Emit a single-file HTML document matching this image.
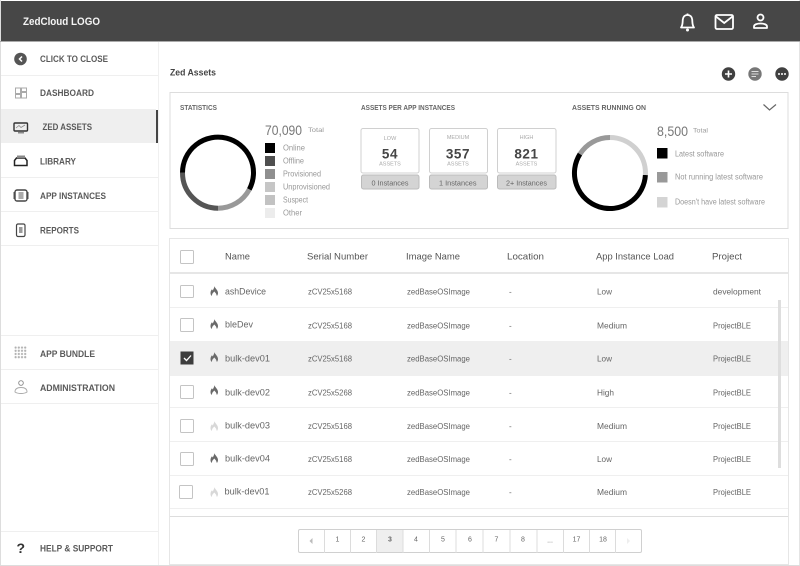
<!DOCTYPE html>
<html lang="en"><head><meta charset="utf-8"><title>Zed Assets</title>
<style>
html,body{margin:0;padding:0;background:#fff;width:800px;height:566px;overflow:hidden}
svg{display:block}
text{font-family:"Liberation Sans",sans-serif;dominant-baseline:central}
.nav{font-size:9px;font-weight:bold;fill:#5a5a5a}
.th{font-size:9.500px;fill:#555}
.td{font-size:8px;fill:#666}
.nm{font-size:9.500px;fill:#666}
.ttl{font-size:7px;font-weight:bold;fill:#666}
.lg{font-size:8px;fill:#999}
.big{font-size:14px;fill:#777}
.sm{font-size:6px;fill:#999}
.num{font-size:13.500px;font-weight:bold;fill:#444;text-anchor:middle;letter-spacing:.6px}
.ins{font-size:7.500px;fill:#666}
.pg{font-size:7px;fill:#666;text-anchor:middle}
</style></head><body>
<svg width="800" height="566" viewBox="0 0 800 566" xmlns="http://www.w3.org/2000/svg">
<defs>
<filter id="b" x="-2%" y="-2%" width="104%" height="104%"><feGaussianBlur stdDeviation="0.35"/></filter>
<path id="fl" d="M3.800 0C4.200 2 7.500 4 7.500 7C7.500 8.200 7.100 9.200 6.400 10L5.500 7.500L3.800 5.500L2 7.500L1.100 10C.4 9.200 0 8.200 0 7C0 5.200 .8 4 1.500 3.200L2.200 4.500C3 3 4 1.500 3.800 0Z"/>
<pattern id="dots" x="14" y="346" width="3.200" height="3.200" patternUnits="userSpaceOnUse"><circle cx="1.600" cy="1.600" r="1.100" fill="#b0b0b0"/></pattern>
</defs>
<g filter="url(#b)">
<rect width="800" height="566" fill="#fff"/>
<rect x="0" y="0" width="1" height="566" fill="#ddd"/>
<rect x="799" y="0" width="1" height="566" fill="#e4e4e4"/>
<rect x="0" y="565" width="800" height="1" fill="#ddd"/>
<rect x="1" y="1" width="799" height="40" fill="#474747"/>
<rect x="0" y="41" width="800" height="1" fill="#aaa"/>
<text x="23" y="22" font-size="11" font-weight="bold" fill="#f5f5f5" textLength="77" lengthAdjust="spacingAndGlyphs">ZedCloud LOGO</text>

<!-- header icons -->
<g fill="none" stroke="#fff" stroke-width="1.800">
<path d="M681 27.500C683 25 682.500 22 682.800 19.500C683.200 16.500 685 15 687.500 15C690 15 691.800 16.500 692.200 19.500C692.500 22 692 25 694 27.500Z" stroke-linejoin="round"/>
<path d="M687.500 13.500V15"/>
<rect x="715.500" y="15" width="17.500" height="14" rx="1.500"/>
<path d="M716 16.500L724.200 23L732.500 16.500"/>
<circle cx="760.500" cy="17.500" r="3"/>
<path d="M754 28V26.500C754 24.500 757 23.500 760.500 23.500C764 23.500 767 24.500 767 26.500V28Z" stroke-linejoin="round"/>
</g>
<circle cx="687.500" cy="30" r="1.500" fill="#fff"/>

<!-- sidebar -->
<rect x="1" y="109" width="155" height="34" fill="#efefef"/>
<rect x="156" y="110" width="2" height="33" fill="#444"/>
<rect x="158" y="42" width="1" height="523" fill="#f0f0f0"/>
<g fill="#efefef">
<rect x="1" y="75" width="157" height="1"/><rect x="1" y="177" width="157" height="1"/><rect x="1" y="211" width="157" height="1"/><rect x="1" y="245" width="157" height="1"/><rect x="1" y="335" width="157" height="1"/><rect x="1" y="369" width="157" height="1"/><rect x="1" y="403" width="157" height="1"/><rect x="1" y="531" width="157" height="1"/>
</g>
<circle cx="20.500" cy="59" r="6.300" fill="#555"/>
<path d="M22 56.500L19.500 59L22 61.500" fill="none" stroke="#fff" stroke-width="1.500"/>
<g fill="none" stroke="#aaa" stroke-width="1">
<rect x="15.500" y="88" width="5" height="5.500"/><rect x="21.500" y="88" width="5" height="3.500"/><rect x="15.500" y="94.500" width="5" height="3.500"/><rect x="21.500" y="92.500" width="5" height="5.500"/>
</g>
<rect x="14" y="123" width="13.500" height="8" rx="1" fill="#eee" stroke="#333" stroke-width="1.400"/>
<path d="M16 128L19 125.500L21 127.500L25 125" fill="none" stroke="#888" stroke-width=".8"/>
<rect x="18" y="131.500" width="6" height="2" fill="#888"/>
<path d="M14.500 165.500V160.500L16.500 158H25L27 160.500V165.500Z" fill="none" stroke="#222" stroke-width="1.500"/>
<rect x="17" y="155.500" width="8" height="2.500" fill="#888"/>
<rect x="15" y="190" width="12" height="11" rx="2" fill="none" stroke="#444" stroke-width="1.400"/>
<rect x="18.500" y="192" width="5" height="7" fill="#aaa"/>
<path d="M14 192V199M28 192V199" stroke="#555" stroke-width="1"/>
<rect x="16.500" y="224" width="8.500" height="12.500" rx="1.500" fill="none" stroke="#444" stroke-width="1.200"/>
<rect x="19" y="227" width="3.500" height="6" fill="#999"/>
<rect x="14" y="346" width="13" height="13" fill="url(#dots)"/>
<g fill="none" stroke="#aaa" stroke-width=".9">
<circle cx="21" cy="383" r="2.300" stroke="#888"/>
<path d="M15 392C15 388.500 18 387.500 21 387.500C24 387.500 27 388.500 27 392C24 394 18 394 15 392Z"/>
</g>
<text x="16.500" y="548" font-size="14" font-weight="bold" fill="#333">?</text>
<text class="nav" x="40" y="59" textLength="68" lengthAdjust="spacingAndGlyphs">CLICK TO CLOSE</text>
<text class="nav" x="40" y="93" textLength="54" lengthAdjust="spacingAndGlyphs">DASHBOARD</text>
<text class="nav" x="42.500" y="127" textLength="49.500" lengthAdjust="spacingAndGlyphs">ZED ASSETS</text>
<text class="nav" x="40" y="161.500" textLength="36" lengthAdjust="spacingAndGlyphs">LIBRARY</text>
<text class="nav" x="40" y="196" textLength="66" lengthAdjust="spacingAndGlyphs">APP INSTANCES</text>
<text class="nav" x="40" y="230.500" textLength="39" lengthAdjust="spacingAndGlyphs">REPORTS</text>
<text class="nav" x="40" y="354" textLength="55" lengthAdjust="spacingAndGlyphs">APP BUNDLE</text>
<text class="nav" x="40" y="388" textLength="75" lengthAdjust="spacingAndGlyphs">ADMINISTRATION</text>
<text class="nav" x="40" y="548.500" textLength="73" lengthAdjust="spacingAndGlyphs">HELP &amp; SUPPORT</text>

<!-- title -->
<text x="170" y="72.500" font-size="9" font-weight="bold" fill="#444" textLength="46" lengthAdjust="spacingAndGlyphs">Zed Assets</text>
<circle cx="728.500" cy="74" r="6.700" fill="#404040"/>
<path d="M725 74H732M728.500 70.500V77.500" stroke="#fff" stroke-width="1.600"/>
<circle cx="755" cy="74" r="6.700" fill="#777"/>
<path d="M751.500 71.500H758.500M751.500 74H758.500M751.500 76.500H756" stroke="#ddd" stroke-width="1"/>
<circle cx="782" cy="74" r="6.700" fill="#404040"/>
<g fill="#fff"><circle cx="779" cy="74" r="1"/><circle cx="782" cy="74" r="1"/><circle cx="785" cy="74" r="1"/></g>

<!-- stats panel -->
<rect x="170" y="92.500" width="618" height="136" fill="#fff" stroke="#ddd"/>
<text class="ttl" x="180" y="108.500" textLength="37" lengthAdjust="spacingAndGlyphs">STATISTICS</text>
<text class="ttl" x="361" y="108.500" textLength="94" lengthAdjust="spacingAndGlyphs">ASSETS PER APP INSTANCES</text>
<text class="ttl" x="572" y="108.500" textLength="74" lengthAdjust="spacingAndGlyphs">ASSETS RUNNING ON</text>
<path d="M763.500 104.500L769.500 110L776 104.500" fill="none" stroke="#666" stroke-width="1.200"/>

<!-- donut 1 -->
<g fill="none" stroke-width="5" transform="translate(218 172.700)">
<path d="M0 35.500A35.500 35.500 0 0 1 -35.500 0" stroke="#555"/>
<path d="M-35.500 0A35.500 35.500 0 1 1 31.300 16.700" stroke="#000"/>
<path d="M31.300 16.700A35.500 35.500 0 0 1 0 35.500" stroke="#999"/>
</g>
<text class="big" x="265" y="130" textLength="37" lengthAdjust="spacingAndGlyphs">70,090</text>
<text class="sm" x="308" y="131" textLength="16" lengthAdjust="spacingAndGlyphs">Total</text>
<rect x="265" y="143" width="10" height="10" fill="#000"/>
<rect x="265" y="156" width="10" height="10" fill="#505050"/>
<rect x="265" y="169" width="10" height="10" fill="#8f8f8f"/>
<rect x="265" y="182" width="10" height="10" fill="#c6c6c6"/>
<rect x="265" y="195" width="10" height="10" fill="#c2c2c2"/>
<rect x="265" y="208" width="10" height="10" fill="#ececec"/>
<text class="lg" x="283" y="148" textLength="22" lengthAdjust="spacingAndGlyphs">Online</text>
<text class="lg" x="283" y="161" textLength="21" lengthAdjust="spacingAndGlyphs">Offline</text>
<text class="lg" x="283" y="174" textLength="38" lengthAdjust="spacingAndGlyphs">Provisioned</text>
<text class="lg" x="283" y="187" textLength="47" lengthAdjust="spacingAndGlyphs">Unprovisioned</text>
<text class="lg" x="283" y="200" textLength="25" lengthAdjust="spacingAndGlyphs">Suspect</text>
<text class="lg" x="283" y="213" textLength="19" lengthAdjust="spacingAndGlyphs">Other</text>

<!-- cards -->
<g fill="#fff" stroke="#d0d0d0">
<rect x="361" y="128.500" width="58" height="44.500" rx="2"/>
<rect x="429.500" y="128.500" width="58" height="44.500" rx="2"/>
<rect x="497.500" y="128.500" width="58.500" height="44.500" rx="2"/>
</g>
<g fill="#d4d4d4" stroke="#bbb">
<rect x="361.500" y="175" width="57.500" height="14" rx="2"/>
<rect x="429.500" y="175" width="58" height="14" rx="2"/>
<rect x="497.500" y="175" width="58.500" height="14" rx="2"/>
</g>
<g font-size="5.500" fill="#aaa" text-anchor="middle">
<text x="390" y="139">LOW</text><text x="458" y="138">MEDIUM</text><text x="526.500" y="138">HIGH</text>
<text x="390" y="164.500">ASSETS</text><text x="458" y="164.500">ASSETS</text><text x="526.500" y="164.500">ASSETS</text>
</g>
<text class="num" x="390" y="154">54</text>
<text class="num" x="458" y="154">357</text>
<text class="num" x="526.500" y="154">821</text>
<text class="ins" x="371.500" y="183" textLength="37" lengthAdjust="spacingAndGlyphs">0 Instances</text>
<text class="ins" x="439" y="183" textLength="37.500" lengthAdjust="spacingAndGlyphs">1 Instances</text>
<text class="ins" x="506" y="183" textLength="41" lengthAdjust="spacingAndGlyphs">2+ Instances</text>

<!-- donut 2 -->
<g fill="none" stroke-width="5" transform="translate(610 173)">
<path d="M35.400 2A35.500 35.500 0 1 1 -30 -19" stroke="#000"/>
<path d="M-30 -19A35.500 35.500 0 0 1 0 -35.500" stroke="#999"/>
<path d="M0 -35.500A35.500 35.500 0 0 1 35.400 2" stroke="#d0d0d0"/>
</g>
<text class="big" x="657" y="131" textLength="31" lengthAdjust="spacingAndGlyphs">8,500</text>
<text class="sm" x="693" y="131.500" textLength="15" lengthAdjust="spacingAndGlyphs">Total</text>
<rect x="657" y="148" width="10.500" height="10.500" fill="#000"/>
<rect x="657" y="172" width="10.500" height="10.500" fill="#999"/>
<rect x="657" y="197" width="10.500" height="10.500" fill="#d4d4d4"/>
<text class="lg" x="675" y="154" textLength="49" lengthAdjust="spacingAndGlyphs" font-size="7">Latest software</text>
<text class="lg" x="675" y="177" textLength="88" lengthAdjust="spacingAndGlyphs" font-size="7">Not running latest software</text>
<text class="lg" x="675" y="202" textLength="90" lengthAdjust="spacingAndGlyphs" font-size="7">Doesn't have latest software</text>

<!-- table -->
<rect x="169.500" y="238.500" width="619" height="326" fill="#fff" stroke="#e6e6e6"/>
<rect x="170" y="341" width="618" height="35" fill="#efefef"/>
<rect x="170" y="272" width="618" height="2" fill="#e6e6e6"/>
<g fill="#efefef">
<rect x="170" y="307" width="618" height="1"/><rect x="170" y="407" width="618" height="1"/><rect x="170" y="441" width="618" height="1"/><rect x="170" y="475" width="618" height="1"/><rect x="170" y="508" width="618" height="1"/>
</g>
<rect x="170" y="516" width="618" height="1" fill="#ddd"/>
<rect x="778" y="300" width="3" height="168" fill="#dedede"/>

<g fill="#fff" stroke="#c4c4c4">
<rect x="180.500" y="250.500" width="13" height="13" rx="1"/>
<rect x="180.500" y="285.500" width="13" height="12" rx="1"/>
<rect x="180.500" y="318.500" width="13" height="13" rx="1"/>
<rect x="180.500" y="385.500" width="13" height="13" rx="1"/>
<rect x="180.500" y="419.500" width="13" height="13" rx="1"/>
<rect x="180.500" y="452.500" width="13" height="13" rx="1"/>
<rect x="179.500" y="485.500" width="13" height="13" rx="1"/>
</g>
<rect x="180.500" y="351.500" width="13" height="13" fill="#3d3d3d"/>
<path d="M184 358L186.500 360.500L191 355.500" fill="none" stroke="#fff" stroke-width="1.300"/>

<g fill="#6a6a6a">
<use href="#fl" x="210.500" y="286"/>
<use href="#fl" x="210.500" y="319"/>
<use href="#fl" x="210.500" y="352"/>
<use href="#fl" x="210.500" y="385"/>
<use href="#fl" x="210.500" y="453"/>
</g>
<g fill="#d8d8d8">
<use href="#fl" x="210.500" y="421"/>
<use href="#fl" x="210.500" y="487"/>
</g>

<text class="th" x="225" y="257" textLength="25" lengthAdjust="spacingAndGlyphs">Name</text>
<text class="th" x="307" y="257" textLength="61" lengthAdjust="spacingAndGlyphs">Serial Number</text>
<text class="th" x="406" y="257" textLength="54" lengthAdjust="spacingAndGlyphs">Image Name</text>
<text class="th" x="507" y="257" textLength="37" lengthAdjust="spacingAndGlyphs">Location</text>
<text class="th" x="596" y="257" textLength="78" lengthAdjust="spacingAndGlyphs">App Instance Load</text>
<text class="th" x="712" y="257" textLength="30" lengthAdjust="spacingAndGlyphs">Project</text>

<text class="nm" x="225" y="292" textLength="41" lengthAdjust="spacingAndGlyphs">ashDevice</text>
<text class="td" x="308" y="292" textLength="44" lengthAdjust="spacingAndGlyphs">zCV25x5168</text>
<text class="td" x="407" y="292" textLength="63" lengthAdjust="spacingAndGlyphs">zedBaseOSImage</text>
<text class="td" x="509" y="292">-</text>
<text class="td" x="597" y="292" textLength="15" lengthAdjust="spacingAndGlyphs">Low</text>
<text class="td" x="713" y="292" textLength="48" lengthAdjust="spacingAndGlyphs">development</text>

<text class="nm" x="225" y="325" textLength="28" lengthAdjust="spacingAndGlyphs">bleDev</text>
<text class="td" x="308" y="326" textLength="44" lengthAdjust="spacingAndGlyphs">zCV25x5168</text>
<text class="td" x="407" y="326" textLength="63" lengthAdjust="spacingAndGlyphs">zedBaseOSImage</text>
<text class="td" x="509" y="326">-</text>
<text class="td" x="597" y="326" textLength="30" lengthAdjust="spacingAndGlyphs">Medium</text>
<text class="td" x="713" y="326" textLength="38" lengthAdjust="spacingAndGlyphs">ProjectBLE</text>

<text class="nm" x="225" y="359" textLength="45" lengthAdjust="spacingAndGlyphs">bulk-dev01</text>
<text class="td" x="308" y="359" textLength="44" lengthAdjust="spacingAndGlyphs">zCV25x5168</text>
<text class="td" x="407" y="359" textLength="63" lengthAdjust="spacingAndGlyphs">zedBaseOSImage</text>
<text class="td" x="509" y="359">-</text>
<text class="td" x="597" y="359" textLength="15" lengthAdjust="spacingAndGlyphs">Low</text>
<text class="td" x="713" y="359" textLength="38" lengthAdjust="spacingAndGlyphs">ProjectBLE</text>

<text class="nm" x="225" y="393" textLength="45" lengthAdjust="spacingAndGlyphs">bulk-dev02</text>
<text class="td" x="308" y="393" textLength="44" lengthAdjust="spacingAndGlyphs">zCV25x5268</text>
<text class="td" x="407" y="393" textLength="63" lengthAdjust="spacingAndGlyphs">zedBaseOSImage</text>
<text class="td" x="509" y="393">-</text>
<text class="td" x="597" y="393" textLength="17" lengthAdjust="spacingAndGlyphs">High</text>
<text class="td" x="713" y="393" textLength="38" lengthAdjust="spacingAndGlyphs">ProjectBLE</text>

<text class="nm" x="225" y="426" textLength="45" lengthAdjust="spacingAndGlyphs">bulk-dev03</text>
<text class="td" x="308" y="426.500" textLength="44" lengthAdjust="spacingAndGlyphs">zCV25x5168</text>
<text class="td" x="407" y="426.500" textLength="63" lengthAdjust="spacingAndGlyphs">zedBaseOSImage</text>
<text class="td" x="509" y="426.500">-</text>
<text class="td" x="597" y="426.500" textLength="30" lengthAdjust="spacingAndGlyphs">Medium</text>
<text class="td" x="713" y="426.500" textLength="38" lengthAdjust="spacingAndGlyphs">ProjectBLE</text>

<text class="nm" x="225" y="459" textLength="45" lengthAdjust="spacingAndGlyphs">bulk-dev04</text>
<text class="td" x="308" y="459.500" textLength="44" lengthAdjust="spacingAndGlyphs">zCV25x5168</text>
<text class="td" x="407" y="459.500" textLength="63" lengthAdjust="spacingAndGlyphs">zedBaseOSImage</text>
<text class="td" x="509" y="459.500">-</text>
<text class="td" x="597" y="459.500" textLength="15" lengthAdjust="spacingAndGlyphs">Low</text>
<text class="td" x="713" y="459.500" textLength="38" lengthAdjust="spacingAndGlyphs">ProjectBLE</text>

<text class="nm" x="224.500" y="492" textLength="45" lengthAdjust="spacingAndGlyphs">bulk-dev01</text>
<text class="td" x="308" y="492.500" textLength="44" lengthAdjust="spacingAndGlyphs">zCV25x5268</text>
<text class="td" x="407" y="492.500" textLength="63" lengthAdjust="spacingAndGlyphs">zedBaseOSImage</text>
<text class="td" x="509" y="492.500">-</text>
<text class="td" x="597" y="492.500" textLength="30" lengthAdjust="spacingAndGlyphs">Medium</text>
<text class="td" x="713" y="492.500" textLength="38" lengthAdjust="spacingAndGlyphs">ProjectBLE</text>

<!-- pagination -->
<rect x="298.500" y="529.500" width="343" height="23" rx="1.500" fill="#fff" stroke="#d0d0d0"/>
<rect x="377" y="530" width="26" height="22" fill="#efefef"/>
<path d="M324.500 530V553M350.500 530V553M376.500 530V553M403 530V553M429.500 530V553M456 530V553M483 530V553M510 530V553M537 530V553M563.500 530V553M589.500 530V553M615.500 530V553" stroke="#dcdcdc"/>
<path d="M312.500 538L309.500 541L312.500 544Z" fill="#bbb"/>
<path d="M627 538L630 541L627 544Z" fill="#eee"/>
<text class="pg" x="337.500" y="540">1</text><text class="pg" x="363.500" y="540">2</text>
<text class="pg" x="390" y="540" font-weight="bold">3</text><text class="pg" x="416" y="540">4</text>
<text class="pg" x="443" y="540">5</text><text class="pg" x="470" y="540">6</text>
<text class="pg" x="496.500" y="540">7</text><text class="pg" x="523" y="540">8</text>
<text class="pg" x="550" y="541">...</text><text class="pg" x="576.500" y="540">17</text><text class="pg" x="603" y="540">18</text>
</g>
</svg>
</body></html>
